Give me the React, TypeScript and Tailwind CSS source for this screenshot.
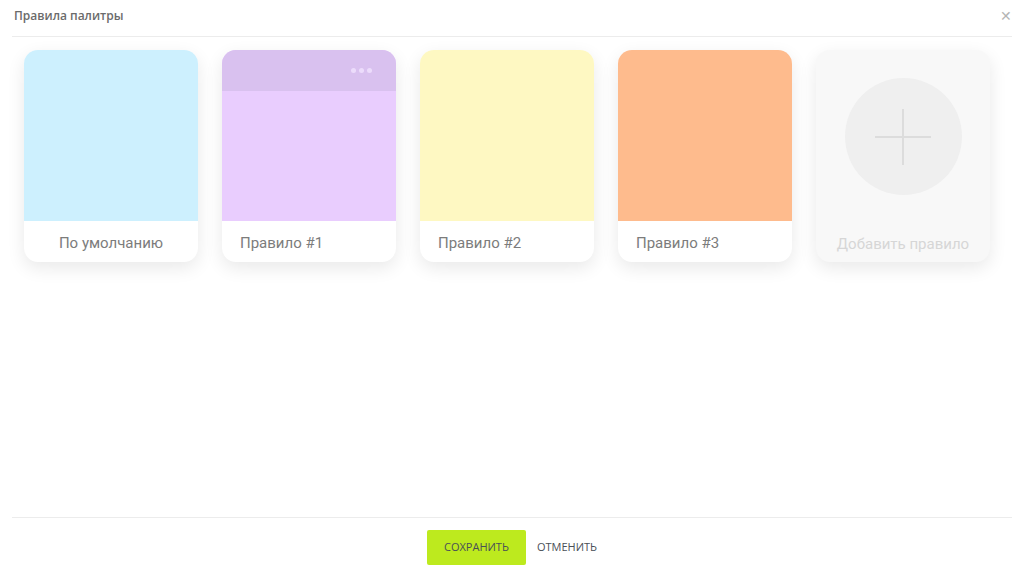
import React from "react";

const font = { fontFamily: '"Open Sans", "Noto Sans", sans-serif' };
const labelFont = { fontFamily: 'Roboto, "Noto Sans", sans-serif' };

function Card({ color, label, center, header }: { color: string; label: string; center?: boolean; header?: boolean }) {
  return (
    <div className="w-[174px] h-[212px] rounded-[14px] bg-white overflow-hidden flex flex-col shadow-[0_6px_18px_rgba(0,0,0,0.09)]">
      <div className="h-[171px] flex flex-col" style={{ background: color }}>
        {header && (
          <div className="h-[41px] bg-[#d9c1ef] flex items-start justify-end pr-[24px] pt-[18px] gap-[3px]">
            <span className="w-[5px] h-[5px] rounded-full bg-[#ecdcfb]" />
            <span className="w-[5px] h-[5px] rounded-full bg-[#ecdcfb]" />
            <span className="w-[5px] h-[5px] rounded-full bg-[#ecdcfb]" />
          </div>
        )}
      </div>
      <div
        className={`flex-1 flex items-center pt-[3px] text-[15px] text-[#7c7c7c] ${center ? "justify-center" : "pl-[18px]"}`}
        style={labelFont}
      >
        {label}
      </div>
    </div>
  );
}

export default function App() {
  return (
    <div className="w-[1024px] h-[574px] bg-white flex flex-col" style={font}>
      <div className="mx-[12px] h-[37px] border-b border-[#ececec] flex items-center justify-between pb-[5px]">
        <span className="text-[12px] font-semibold text-[#6b6b6b] pl-[2px]">Правила палитры</span>
        <span className="text-[#b5b5b5] text-[14px] leading-none">✕</span>
      </div>
      <div className="flex gap-[24px] pl-[24px] pt-[13px]">
        <Card color="#cdf0fe" label="По умолчанию" center />
        <Card color="#e9cdfe" label="Правило #1" header />
        <Card color="#fef8c2" label="Правило #2" />
        <Card color="#febb8d" label="Правило #3" />
        <div className="w-[174px] h-[212px] rounded-[14px] bg-[#f8f8f8] flex flex-col items-center shadow-[0_6px_18px_rgba(0,0,0,0.09)]">
          <div className="mt-[28px] w-[117px] h-[117px] rounded-full bg-[#efefef] flex items-center justify-center">
            <svg width="58" height="58" viewBox="0 0 58 58">
              <line x1="29" y1="1" x2="29" y2="57" stroke="#dcdcdc" strokeWidth="2" />
              <line x1="1" y1="29" x2="57" y2="29" stroke="#dcdcdc" strokeWidth="2" />
            </svg>
          </div>
          <div className="mt-[38px] text-[15px] text-[#d6d6d6]" style={labelFont}>Добавить правило</div>
        </div>
      </div>
      <div className="flex-1" />
      <div className="mx-[12px] border-t border-[#ececec] h-[57px] flex items-start justify-center gap-[11px] pt-[12px]">
        <button className="w-[99px] h-[35px] rounded-[2px] bg-[#bdea1e] text-[11px] text-[#4a4f57]">СОХРАНИТЬ</button>
        <span className="h-[35px] flex items-center text-[11px] text-[#4a4f57]">ОТМЕНИТЬ</span>
      </div>
    </div>
  );
}
